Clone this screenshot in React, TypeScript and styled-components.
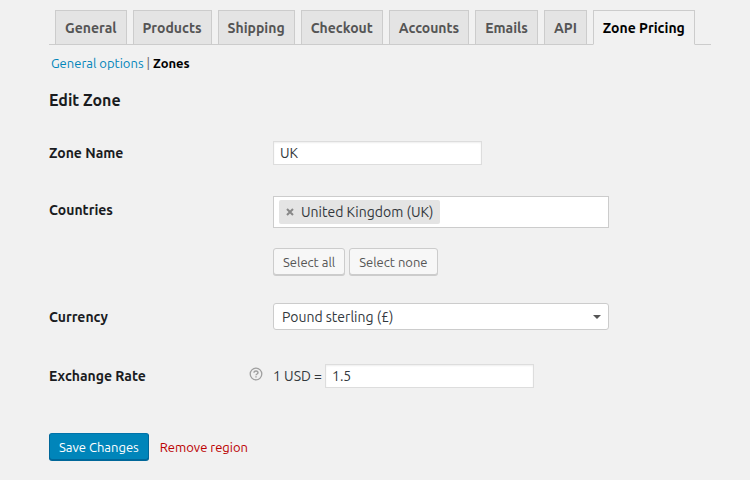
import React from "react";
import styled, { createGlobalStyle, css } from "styled-components";

const GlobalStyle = createGlobalStyle`
  *, *::before, *::after { box-sizing: border-box; }
  body {
    margin: 0;
    background: #f1f1f1;
    color: #32373c;
    font-family: Ubuntu, "Noto Sans", sans-serif;
    font-size: 14px;
    line-height: 20px;
  }
  button, input, select { font: inherit; color: inherit; margin: 0; }
  a { text-decoration: none; }
`;

const Page = styled.main`
  padding: 10px 39px 16px 49px;
`;

const Tabs = styled.nav`
  display: flex;
  gap: 6px;
  padding: 0 6px;
  border-bottom: 1px solid #ccc;
`;

const Tab = styled.a<{ $active?: boolean }>`
  height: 35px;
  margin-bottom: -1px;
  padding: 6px 9px;
  border: 1px solid #ccc;
  background: #e4e4e4;
  color: #555;
  font-weight: 700;
  line-height: 22px;
  white-space: nowrap;
  ${(p) =>
    p.$active &&
    css`
      background: #f1f1f1;
      border-bottom-color: #f1f1f1;
      color: #000;
    `}
`;

const SubNav = styled.nav`
  display: flex;
  gap: 3px;
  margin-top: 8px;
  padding: 0 2px;
  color: #666;
  font-size: 13px;
`;

const SubLink = styled.a<{ $active?: boolean }>`
  color: ${(p) => (p.$active ? "#000" : "#0085ba")};
  font-weight: ${(p) => (p.$active ? 700 : 400)};
`;

const Title = styled.h2`
  margin: 16px 0 30px;
  color: #1a1c1f;
  font-size: 16px;
  font-weight: 700;
  line-height: 22px;
`;

const Row = styled.div<{ $gap?: number }>`
  display: grid;
  grid-template-columns: 200px 24px minmax(0, 1fr);
  align-items: start;
  margin-bottom: ${(p) => p.$gap ?? 31}px;
`;

const Label = styled.label<{ $height?: number }>`
  color: #1a1c1f;
  font-weight: 700;
  line-height: ${(p) => p.$height ?? 24}px;
`;

const Help = styled.span`
  display: flex;
  padding-top: 3px;
`;

const Field = styled.div`
  grid-column: 3;
`;

const TextInput = styled.input`
  width: 100%;
  max-width: 209px;
  height: 24px;
  padding: 0 6px;
  border: 1px solid #ddd;
  background: #fff;
  box-shadow: inset 0 1px 2px rgba(0, 0, 0, 0.07);
`;

const TokenBox = styled.div`
  display: flex;
  max-width: 336px;
  height: 32px;
  padding: 3px 5px;
  border: 1px solid #ccc;
  background: #fff;
`;

const Token = styled.span`
  display: flex;
  align-items: center;
  gap: 7px;
  height: 24px;
  padding: 0 7px;
  border-radius: 2px;
  background: #e4e4e4;
  white-space: nowrap;
`;

const TokenRemove = styled.button`
  display: flex;
  padding: 0;
  border: 0;
  background: none;
`;

const TokenSearch = styled.input`
  flex: 1;
  min-width: 0;
  padding: 0 4px;
  border: 0;
  outline: 0;
  background: none;
`;

const Buttons = styled.div`
  display: flex;
  gap: 4px;
  margin-top: 20px;
`;

const Button = styled.button<{ $primary?: boolean }>`
  height: 27px;
  padding: 0 9px;
  border: 1px solid #ccc;
  border-radius: 3px;
  background: #f7f7f7;
  box-shadow: 0 1px 0 #ccc;
  color: #555;
  font-size: 13px;
  white-space: nowrap;
  ${(p) =>
    p.$primary &&
    css`
      background: #0085ba;
      border-color: #0073aa #006799 #006799;
      box-shadow: 0 1px 0 #006799;
      color: #fff;
    `}
`;

const SelectWrap = styled.div`
  display: grid;
  grid-template-columns: minmax(0, 1fr) 16px;
  align-items: center;
  max-width: 336px;
`;

const Select = styled.select`
  grid-area: 1 / 1 / 2 / 3;
  appearance: none;
  height: 27px;
  padding: 0 24px 0 8px;
  border: 1px solid #ccc;
  border-radius: 3px;
  background: #fff;
`;

const Arrow = styled.svg`
  grid-area: 1 / 2;
  pointer-events: none;
`;

const Rate = styled.div`
  display: flex;
  align-items: center;
  gap: 3px;
`;

const Actions = styled.div`
  display: flex;
  align-items: center;
  gap: 11px;
`;

const Danger = styled.a`
  color: #b00;
  font-size: 13px;
`;

const tabs = ["General", "Products", "Shipping", "Checkout", "Accounts", "Emails", "API", "Zone Pricing"];

export default function App() {
  return (
    <Page>
      <GlobalStyle />
      <Tabs>
        {tabs.map((name) => (
          <Tab key={name} href="#" $active={name === "Zone Pricing"}>
            {name}
          </Tab>
        ))}
      </Tabs>
      <SubNav>
        <SubLink href="#">General options</SubLink>
        <span>|</span>
        <SubLink href="#" $active>Zones</SubLink>
      </SubNav>
      <Title>Edit Zone</Title>
      <form onSubmit={(e) => e.preventDefault()}>
        <Row>
          <Label htmlFor="zone">Zone Name</Label>
          <Field>
            <TextInput id="zone" type="text" defaultValue="UK" />
          </Field>
        </Row>
        <Row $gap={28}>
          <Label htmlFor="countries" $height={28}>Countries</Label>
          <Field>
            <TokenBox>
              <Token>
                <TokenRemove type="button" aria-label="Remove United Kingdom (UK)">
                  <svg width="8" height="8" viewBox="0 0 8 8" stroke="#888" strokeWidth="2">
                    <path d="M1 1l6 6M7 1L1 7" />
                  </svg>
                </TokenRemove>
                United Kingdom (UK)
              </Token>
              <TokenSearch id="countries" type="text" />
            </TokenBox>
            <Buttons>
              <Button type="button">Select all</Button>
              <Button type="button">Select none</Button>
            </Buttons>
          </Field>
        </Row>
        <Row $gap={33}>
          <Label htmlFor="currency" $height={28}>Currency</Label>
          <Field>
            <SelectWrap>
              <Select id="currency" defaultValue="gbp">
                <option value="gbp">Pound sterling (£)</option>
              </Select>
              <Arrow width="8" height="4" viewBox="0 0 8 4" fill="#555">
                <path d="M0 0h8L4 4z" />
              </Arrow>
            </SelectWrap>
          </Field>
        </Row>
        <Row $gap={45}>
          <Label htmlFor="rate">Exchange Rate</Label>
          <Help>
            <svg width="14" height="14" viewBox="0 0 14 14" fill="none" stroke="#a0a0a0" role="img" aria-label="Help">
              <circle cx="7" cy="7" r="5.8" strokeWidth="1.3" />
              <path d="M5 5.7c0-2.4 4-2.2 4 0 0 1.3-2 1.3-2 2.6M7 9.2v1.4" strokeWidth="1.4" />
            </svg>
          </Help>
          <Rate>
            <span>1 USD =</span>
            <TextInput id="rate" type="text" defaultValue="1.5" />
          </Rate>
        </Row>
        <Actions>
          <Button type="submit" $primary>Save Changes</Button>
          <Danger href="#">Remove region</Danger>
        </Actions>
      </form>
    </Page>
  );
}
